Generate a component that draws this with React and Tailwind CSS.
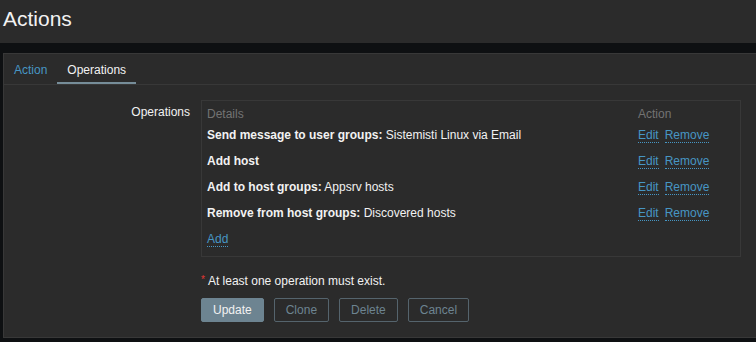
export default function App() {
  const rows = [
    { b: "Send message to user groups:", t: " Sistemisti Linux via Email" },
    { b: "Add host", t: "" },
    { b: "Add to host groups:", t: " Appsrv hosts" },
    { b: "Remove from host groups:", t: " Discovered hosts" },
  ];
  const link = "text-[#4796c4] border-b border-dotted border-[#4796c4]";
  return (
    <div
      className="w-[756px] h-[342px] overflow-hidden bg-[#0e1012] text-[12px] leading-[14px] text-[#f2f2f2]"
      style={{ fontFamily: '"Liberation Sans", Arial, sans-serif' }}
    >
      <div className="h-[43px] bg-[#2b2b2b] pl-[3px] pt-[7px]">
        <h1 className="text-[21px] leading-[24px] font-normal text-[#f2f2f2]">Actions</h1>
      </div>
      <div className="mt-[10px] ml-[3px] w-[780px] h-[285px] bg-[#2b2b2b] border border-[#383838]">
        <div className="flex border-b border-[#383838] pl-0">
          <div className="px-[10px] pt-[9px] pb-[5px] border-b-2 border-transparent text-[#4796c4]">Action</div>
          <div className="px-[10px] pt-[9px] pb-[5px] border-b-2 border-[#768d99] text-[#f2f2f2]">Operations</div>
        </div>
        <div className="flex pt-[15px]">
          <div className="w-[186px] text-right pt-[5px]">Operations</div>
          <div className="ml-[11px] flex flex-col">
            <div className="w-[540px] border border-[#383838] px-[5px] pt-[6px] pb-[10px]">
              <div className="flex text-[#737373] pb-[1px]">
                <div className="flex-1">Details</div>
                <div className="w-[97px]">Action</div>
              </div>
              {rows.map((r, i) => (
                <div key={i} className="flex py-[6px] h-[26px]">
                  <div className="flex-1">
                    <span className="font-bold">{r.b}</span>
                    {r.t}
                  </div>
                  <div className="w-[97px] h-[14px]">
                    <span className={link + " mr-[6px]"}>Edit</span>
                    <span className={link}>Remove</span>
                  </div>
                </div>
              ))}
              <div className="pt-[6px] h-[20px]">
                <span className={link}>Add</span>
              </div>
            </div>
            <div className="mt-[17px] flex items-center">
              <span className="text-[#e33734] text-[10px] mr-[3px] -mt-[3px]">*</span>
              <span>At least one operation must exist.</span>
            </div>
            <div className="mt-[10px] flex gap-[10px]">
              <button className="h-[24px] px-[11px] rounded-[2px] bg-[#6d8491] border border-[#6d8491] text-[#f2f2f2]">Update</button>
              <button className="h-[24px] px-[11px] rounded-[2px] border border-[#55646d] text-[#6d8491]">Clone</button>
              <button className="h-[24px] px-[11px] rounded-[2px] border border-[#55646d] text-[#6d8491]">Delete</button>
              <button className="h-[24px] px-[11px] rounded-[2px] border border-[#55646d] text-[#6d8491]">Cancel</button>
            </div>
          </div>
        </div>
      </div>
    </div>
  );
}
